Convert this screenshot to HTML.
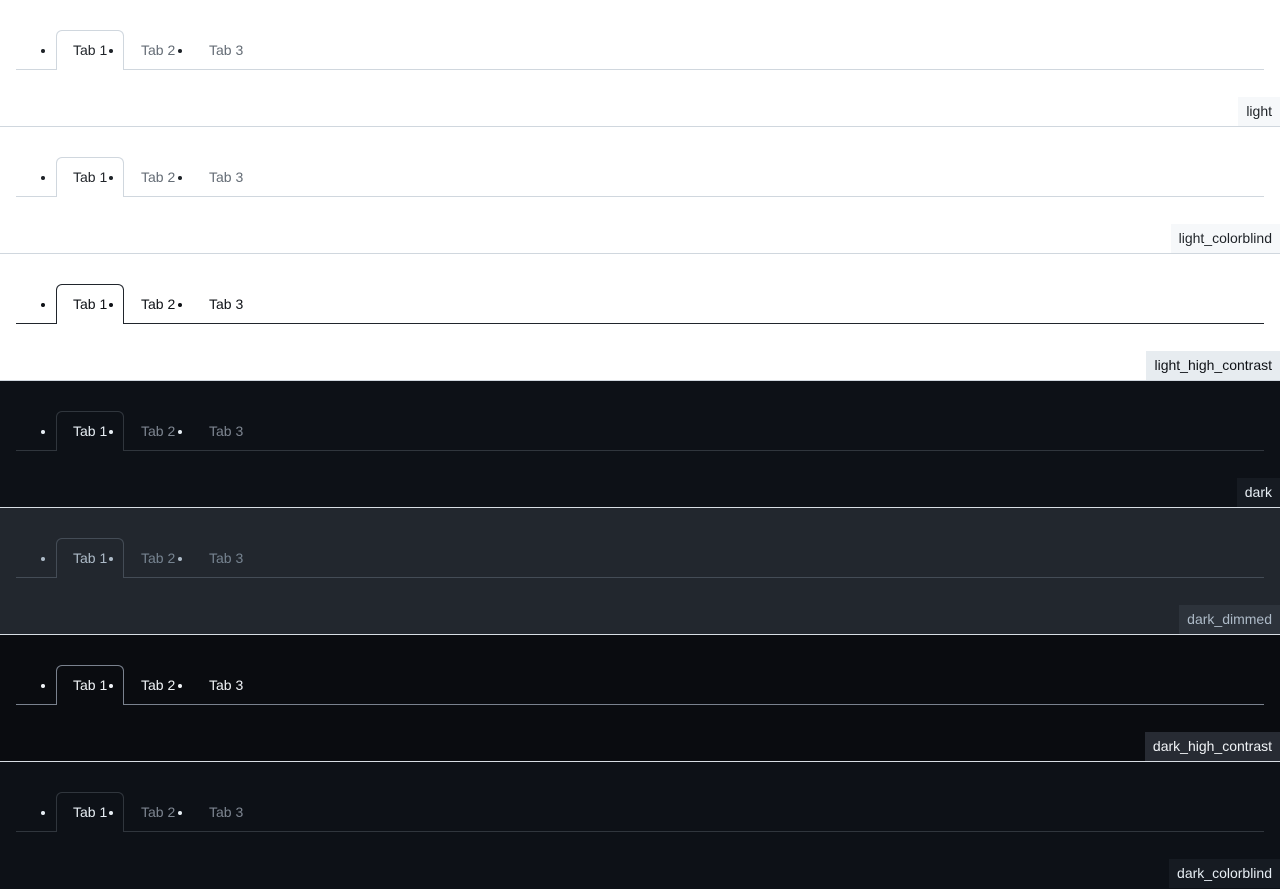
<!DOCTYPE html><html><head><style>
*{margin:0;padding:0;box-sizing:border-box}
body{width:1280px;height:888px;overflow:hidden;font-family:"Liberation Sans",sans-serif;font-size:14px;background:#0d1117}
.s{position:absolute;left:0;width:1280px;height:127px;border-bottom:1px solid var(--sep);background:var(--bg)}
.ul{position:absolute;left:16px;width:1248px;top:69px;height:1px;background:var(--bd)}
.tab1{position:absolute;left:56px;top:30px;width:68px;height:40px;border:1px solid var(--bd);border-bottom:none;border-radius:6px 6px 0 0;background:var(--bg)}
.t{position:absolute;top:42px;line-height:16px;color:var(--mu)}
.a{color:var(--fg)}
.d{position:absolute;top:49px;width:4px;height:4px;border-radius:50%;background:var(--fg)}
.lab{position:absolute;right:0;bottom:0;height:29px;line-height:29px;padding:0 8px;background:var(--lb);color:var(--fg)}
</style></head><body>
<div class="s" style="top:0;--bg:#fff;--bd:#d0d7de;--fg:#1f2328;--mu:#656d76;--lb:#f6f8fa;--sep:#d0d7de">
<div class="ul"></div><div class="tab1"></div><div class="d" style="left:41px"></div><span class="t a" style="left:73px">Tab 1</span><div class="d" style="left:109px"></div><span class="t" style="left:141px">Tab 2</span><div class="d" style="left:178px"></div><span class="t" style="left:209px">Tab 3</span><div class="lab">light</div></div>
<div class="s" style="top:127px;--bg:#fff;--bd:#d0d7de;--fg:#1f2328;--mu:#656d76;--lb:#f6f8fa;--sep:#d0d7de">
<div class="ul"></div><div class="tab1"></div><div class="d" style="left:41px"></div><span class="t a" style="left:73px">Tab 1</span><div class="d" style="left:109px"></div><span class="t" style="left:141px">Tab 2</span><div class="d" style="left:178px"></div><span class="t" style="left:209px">Tab 3</span><div class="lab">light_colorblind</div></div>
<div class="s" style="top:254px;--bg:#fff;--bd:#20252c;--fg:#0e1116;--mu:#0e1116;--lb:#e7ecf0;--sep:#d0d7de">
<div class="ul"></div><div class="tab1"></div><div class="d" style="left:41px"></div><span class="t a" style="left:73px">Tab 1</span><div class="d" style="left:109px"></div><span class="t" style="left:141px">Tab 2</span><div class="d" style="left:178px"></div><span class="t" style="left:209px">Tab 3</span><div class="lab">light_high_contrast</div></div>
<div class="s" style="top:381px;--bg:#0d1117;--bd:#30363d;--fg:#e6edf3;--mu:#7d8590;--lb:#161b22;--sep:#d8dee4">
<div class="ul"></div><div class="tab1"></div><div class="d" style="left:41px"></div><span class="t a" style="left:73px">Tab 1</span><div class="d" style="left:109px"></div><span class="t" style="left:141px">Tab 2</span><div class="d" style="left:178px"></div><span class="t" style="left:209px">Tab 3</span><div class="lab">dark</div></div>
<div class="s" style="top:508px;--bg:#22272e;--bd:#444c56;--fg:#adbac7;--mu:#768390;--lb:#2d333b;--sep:#d8dee4">
<div class="ul"></div><div class="tab1"></div><div class="d" style="left:41px"></div><span class="t a" style="left:73px">Tab 1</span><div class="d" style="left:109px"></div><span class="t" style="left:141px">Tab 2</span><div class="d" style="left:178px"></div><span class="t" style="left:209px">Tab 3</span><div class="lab">dark_dimmed</div></div>
<div class="s" style="top:635px;--bg:#0a0c10;--bd:#7a828e;--fg:#f0f3f6;--mu:#f0f3f6;--lb:#272b33;--sep:#d8dee4">
<div class="ul"></div><div class="tab1"></div><div class="d" style="left:41px"></div><span class="t a" style="left:73px">Tab 1</span><div class="d" style="left:109px"></div><span class="t" style="left:141px">Tab 2</span><div class="d" style="left:178px"></div><span class="t" style="left:209px">Tab 3</span><div class="lab">dark_high_contrast</div></div>
<div class="s" style="top:762px;--bg:#0d1117;--bd:#30363d;--fg:#e6edf3;--mu:#7d8590;--lb:#161b22;--sep:#0d1117">
<div class="ul"></div><div class="tab1"></div><div class="d" style="left:41px"></div><span class="t a" style="left:73px">Tab 1</span><div class="d" style="left:109px"></div><span class="t" style="left:141px">Tab 2</span><div class="d" style="left:178px"></div><span class="t" style="left:209px">Tab 3</span><div class="lab">dark_colorblind</div></div>
</body></html>
